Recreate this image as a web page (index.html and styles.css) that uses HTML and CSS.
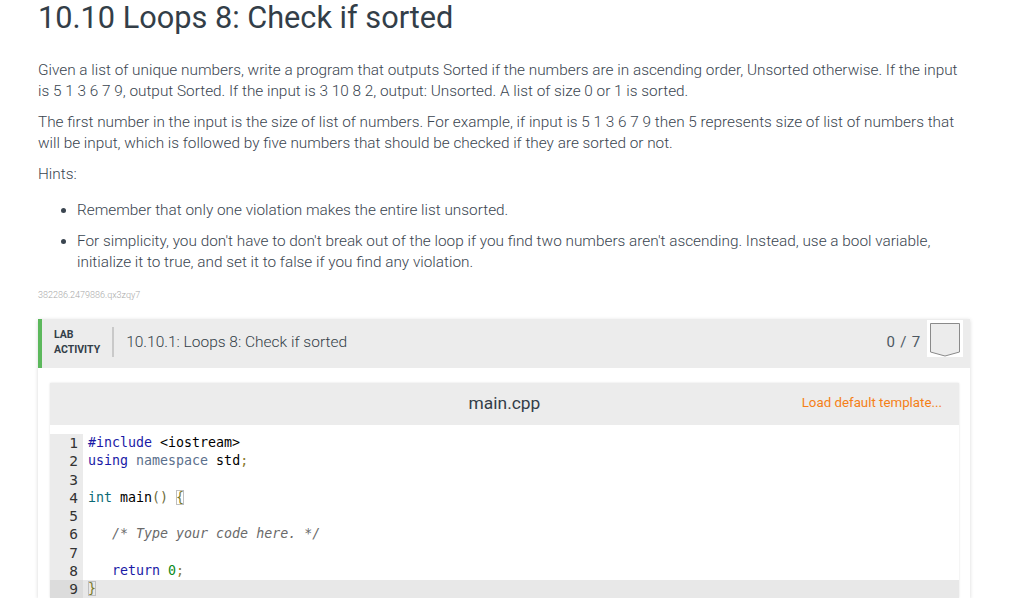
FILE: index.html
```html
<!DOCTYPE html>
<html lang="en">
<head>
<meta charset="utf-8">
<title>10.10 Loops 8: Check if sorted</title>
<link rel="stylesheet" href="styles.css">
</head>
<body>
<div class="page">
  <h1 class="title">10.10 Loops 8: Check if sorted</h1>
  <p class="para">Given a list of unique numbers, write a program that outputs Sorted if the numbers are in ascending order, Unsorted otherwise. If the input is 5 1 3 6 7 9, output Sorted. If the input is 3 10 8 2, output: Unsorted. A list of size 0 or 1 is sorted.</p>
  <p class="para">The first number in the input is the size of list of numbers. For example, if input is 5 1 3 6 7 9 then 5 represents size of list of numbers that will be input, which is followed by five numbers that should be checked if they are sorted or not.</p>
  <p class="para hints">Hints:</p>
  <ul class="hint-list">
    <li>Remember that only one violation makes the entire list unsorted.</li>
    <li>For simplicity, you don't have to don't break out of the loop if you find two numbers aren't ascending. Instead, use a bool variable, initialize it to true, and set it to false if you find any violation.</li>
  </ul>
  <div class="resource-id">382286.2479886.qx3zqy7</div>

  <section class="activity">
    <header class="activity-header">
      <div class="activity-label">LAB<br>ACTIVITY</div>
      <div class="activity-divider"></div>
      <div class="activity-title">10.10.1: Loops 8: Check if sorted</div>
      <div class="score">0 / 7</div>
      <div class="badge">
        <svg width="36" height="37" viewBox="0 0 36 37">
          <path d="M3.5 3.5 H32.5 V32 L18 36 L3.5 32 Z" fill="#ececec" stroke="#8a8a8a" stroke-width="1"/>
        </svg>
      </div>
    </header>
    <div class="activity-body">
      <div class="editor">
        <div class="editor-header">
          <span class="spacer"></span>
          <span class="filename">main.cpp</span>
          <span class="load-template">Load default template...</span>
        </div>
        <div class="code">
          <div class="line"><span class="gutter">1</span><span class="src"><span class="tk-kw">#include</span> &lt;iostream&gt;</span></div>
          <div class="line"><span class="gutter">2</span><span class="src"><span class="tk-kw">using</span> <span class="tk-ns">namespace</span> std<span class="tk-punct">;</span></span></div>
          <div class="line"><span class="gutter">3</span><span class="src"></span></div>
          <div class="line"><span class="gutter">4</span><span class="src"><span class="tk-type">int</span> main<span class="tk-paren">()</span> <span class="tk-brace match">{</span></span></div>
          <div class="line"><span class="gutter">5</span><span class="src"></span></div>
          <div class="line"><span class="gutter">6</span><span class="src">   <span class="tk-comment">/* Type your code here. */</span></span></div>
          <div class="line"><span class="gutter">7</span><span class="src"></span></div>
          <div class="line"><span class="gutter">8</span><span class="src">   <span class="tk-kw">return</span> <span class="tk-num">0</span><span class="tk-punct">;</span></span></div>
          <div class="line active"><span class="gutter">9</span><span class="src"><span class="tk-brace match">}</span></span></div>
        </div>
      </div>
    </div>
  </section>
</div>
</body>
</html>
```

FILE: styles.css
```css
html, body {
  margin: 0;
  padding: 0;
  background: #ffffff;
}

body {
  font-family: Roboto, "Liberation Sans", Arial, sans-serif;
  color: #4d5862;
}

.page {
  width: 932px;
  margin-left: 38px;
}

.title {
  margin: 0;
  font-size: 30.7px;
  line-height: 36px;
  font-weight: 400;
  color: #333e48;
}

.para {
  max-width: 928px;
  margin: 24px 0 10px;
  font-size: 15.35px;
  line-height: 21px;
  font-weight: 300;
  color: #3a4550;
}

.para + .para {
  margin-top: 0;
}

.hints {
  margin-bottom: 15px;
}

.hint-list {
  max-width: 889px;
  margin: 0;
  padding-left: 39px;
  font-size: 15.35px;
  line-height: 21px;
  font-weight: 300;
  color: #3a4550;
}

.hint-list li {
  margin-bottom: 10px;
}

.hint-list li:last-child {
  margin-bottom: 0;
}

.resource-id {
  margin-top: 16px;
  font-size: 9px;
  line-height: 12px;
  color: #a8a8a8;
  font-weight: 300;
}

.activity {
  margin-top: 18px;
  background: #ffffff;
  box-shadow: 0 1px 4px rgba(0, 0, 0, 0.16);
}

.activity-header {
  display: flex;
  align-items: center;
  height: 49px;
  box-sizing: border-box;
  padding-left: 12px;
  padding-right: 7px;
  padding-bottom: 3px;
  background: #ececec;
  border-left: 4px solid #5cb85c;
}

.activity-label {
  font-size: 10.5px;
  line-height: 15px;
  font-weight: 700;
  color: #333e48;
}

.activity-divider {
  width: 2px;
  height: 30px;
  background: #c9c9c9;
  margin-left: 12px;
  margin-right: 12px;
}

.activity-title {
  flex: 1;
  font-size: 15.5px;
  font-weight: 300;
  color: #333e48;
}

.score {
  font-size: 15px;
  letter-spacing: 0.8px;
  color: #4d5862;
  margin-right: 6px;
}

.badge {
  align-self: flex-start;
  margin-top: 1px;
  width: 36px;
  height: 37px;
  background: #ffffff;
}

.badge svg {
  display: block;
}

.activity-body {
  padding: 15px 11px 0 12px;
}

.editor {
  box-shadow: 0 0 2px rgba(0, 0, 0, 0.12);
}

.editor-header {
  display: grid;
  grid-template-columns: 1fr auto 1fr;
  align-items: center;
  height: 42px;
  padding: 0 17px 3px 17px;
  box-sizing: border-box;
  background: #ececec;
}

.filename {
  font-size: 17.4px;
  font-weight: 400;
  color: #333e48;
}

.load-template {
  justify-self: end;
  font-size: 13.3px;
  color: #f57f17;
}

.code {
  background: #ffffff;
  padding-top: 9px;
  font-family: "DejaVu Sans Mono", "Liberation Mono", monospace;
  font-size: 13.3px;
  line-height: 18.25px;
  color: #000000;
}

.line {
  display: flex;
  height: 18.25px;
}

.gutter {
  width: 33px;
  box-sizing: border-box;
  padding-right: 5px;
  text-align: right;
  background: #ebebeb;
  color: #333333;
  font-size: 14.5px;
  flex: none;
}

.src {
  flex: 1;
  padding-left: 5px;
  white-space: pre;
}

.line.active .gutter {
  background: #dcdcdc;
}

.line.active .src {
  background: #e8e8e8;
}

.tk-kw {
  color: #1a1aa6;
}

.tk-ns {
  color: #5b6f8c;
}

.tk-type {
  color: #0b6b76;
}

.tk-punct {
  color: #8b7a2e;
}

.tk-paren {
  color: #6b6b3a;
}

.tk-brace {
  color: #7a7a2a;
}

.tk-comment {
  color: #6a6a6a;
  font-style: italic;
}

.tk-num {
  color: #0a8a1a;
}

.match {
  outline: 1px solid #bfbfbf;
  outline-offset: -1px;
}
```
